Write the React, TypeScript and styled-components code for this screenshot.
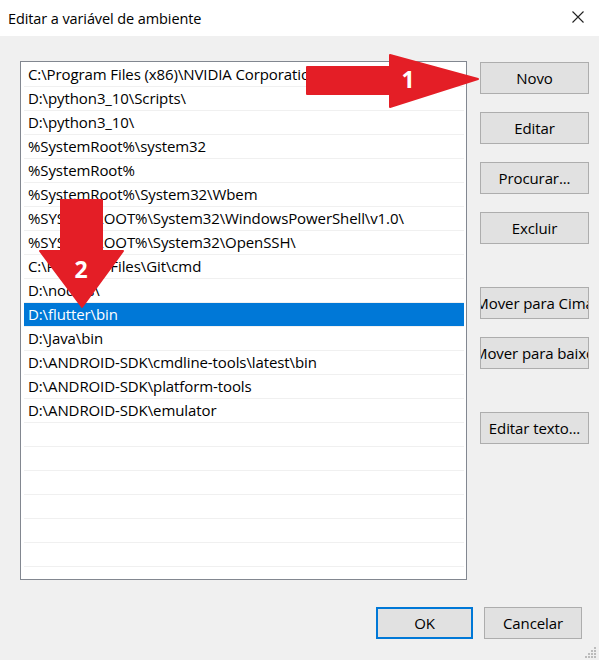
import styled, { createGlobalStyle } from "styled-components";

const GlobalStyle = createGlobalStyle`
  html, body {
    margin: 0;
    padding: 0;
    background: #f0f0f0;
  }
  * {
    box-sizing: border-box;
  }
`;

const FONT = `"Open Sans", "Noto Sans", "Liberation Sans", sans-serif`;
const RED = "#e41e26";

const PATHS = [
  "C:\\Program Files (x86)\\NVIDIA Corporation\\PhysX\\Common",
  "D:\\python3_10\\Scripts\\",
  "D:\\python3_10\\",
  "%SystemRoot%\\system32",
  "%SystemRoot%",
  "%SystemRoot%\\System32\\Wbem",
  "%SYSTEMROOT%\\System32\\WindowsPowerShell\\v1.0\\",
  "%SYSTEMROOT%\\System32\\OpenSSH\\",
  "C:\\Program Files\\Git\\cmd",
  "D:\\nodejs\\",
  "D:\\flutter\\bin",
  "D:\\Java\\bin",
  "D:\\ANDROID-SDK\\cmdline-tools\\latest\\bin",
  "D:\\ANDROID-SDK\\platform-tools",
  "D:\\ANDROID-SDK\\emulator",
];

const SELECTED = 10;
const TOTAL_ROWS = 22;

const Dialog = styled.div`
  position: relative;
  width: 599px;
  height: 660px;
  background: #f0f0f0;
  display: flex;
  flex-direction: column;
  font-family: ${FONT};
  color: #000;
  overflow: hidden;
`;

const TitleBar = styled.div`
  height: 36px;
  background: #fff;
  display: flex;
  align-items: center;
  justify-content: space-between;
  padding: 0 15px 0 8px;
`;

const Title = styled.div`
  font-size: 14.5px;
  letter-spacing: -0.1px;
`;

const CloseIcon = styled.svg`
  width: 12px;
  height: 12px;
  margin-top: -2px;
`;

const Body = styled.div`
  display: flex;
  padding: 25px 0 0 20px;
`;

const ListBox = styled.div`
  width: 447px;
  height: 519px;
  background: #fff;
  border: 1px solid #828790;
  padding: 1px 2px 0 3px;
  overflow: hidden;
`;

const Row = styled.div<{ selected?: boolean }>`
  height: 24px;
  line-height: 23px;
  padding-left: 4px;
  font-size: 15px;
  letter-spacing: -0.1px;
  white-space: nowrap;
  overflow: hidden;
  border-bottom: 1px solid #f0f0f0;
  background: ${({ selected }) => (selected ? "#0078d7" : "transparent")};
  color: ${({ selected }) => (selected ? "#fff" : "#000")};
`;

const ButtonColumn = styled.div`
  display: flex;
  flex-direction: column;
  gap: 18px;
  margin-left: 13px;
  padding-top: 1px;
  width: 109px;
`;

const WinButton = styled.div<{ gapAbove?: boolean; primary?: boolean; w?: number }>`
  height: 32px;
  width: ${({ w }) => (w ? `${w}px` : "100%")};
  margin-top: ${({ gapAbove }) => (gapAbove ? "25px" : "0")};
  background: #e1e1e1;
  border: ${({ primary }) => (primary ? "2px solid #0078d7" : "1px solid #adadad")};
  display: flex;
  align-items: center;
  justify-content: center;
  font-size: 15px;
  letter-spacing: -0.1px;
  white-space: nowrap;
  overflow: hidden;
`;

const Footer = styled.div`
  display: flex;
  justify-content: flex-end;
  gap: 11px;
  padding: 27px 17px 0 0;
`;

const Overlay = styled.svg`
  position: absolute;
  pointer-events: none;
`;

const Grip = styled.svg`
  position: absolute;
  right: 2px;
  bottom: 1px;
`;

const ArrowNumber = styled.text`
  font-family: ${FONT};
  font-weight: 700;
  font-size: 23px;
  fill: #fff;
`;

export default function App() {
  const rows = Array.from({ length: TOTAL_ROWS }, (_, i) => PATHS[i] ?? "");

  return (
    <>
      <GlobalStyle />
      <Dialog>
        <TitleBar>
          <Title>Editar a variável de ambiente</Title>
          <CloseIcon viewBox="0 0 12 12">
            <path d="M0.5 0.5 L11.5 11.5 M11.5 0.5 L0.5 11.5" stroke="#222" strokeWidth="1.1" />
          </CloseIcon>
        </TitleBar>

        <Body>
          <ListBox>
            {rows.map((p, i) => (
              <Row key={i} selected={i === SELECTED}>
                {p}
              </Row>
            ))}
          </ListBox>
          <ButtonColumn>
            <WinButton>Novo</WinButton>
            <WinButton>Editar</WinButton>
            <WinButton>Procurar...</WinButton>
            <WinButton>Excluir</WinButton>
            <WinButton gapAbove>Mover para Cima</WinButton>
            <WinButton>Mover para baixo</WinButton>
            <WinButton gapAbove>Editar texto...</WinButton>
          </ButtonColumn>
        </Body>

        <Footer>
          <WinButton primary w={97}>OK</WinButton>
          <WinButton w={98}>Cancelar</WinButton>
        </Footer>

        {/* arrow 1, pointing at "Novo" */}
        <Overlay style={{ left: 305, top: 53 }} width="176" height="56" viewBox="0 0 176 56">
          <polygon
            points="2,14 85,14 85,2 173,26 85,54 85,41 2,41"
            fill={RED}
            stroke={RED}
            strokeWidth="2"
            strokeLinejoin="round"
          />
          <ArrowNumber x="103" y="35" textAnchor="middle">1</ArrowNumber>
        </Overlay>

        {/* arrow 2, pointing at D:\flutter\bin */}
        <Overlay style={{ left: 38, top: 198 }} width="90" height="112" viewBox="0 0 90 112">
          <polygon
            points="23,2 64,2 64,53 85,53 44,109 2,53 23,53"
            fill={RED}
            stroke={RED}
            strokeWidth="2"
            strokeLinejoin="round"
          />
          <ArrowNumber x="43" y="80" textAnchor="middle">2</ArrowNumber>
        </Overlay>

        <Grip width="12" height="12" viewBox="0 0 12 12">
          {[
            [9, 0],
            [9, 3],
            [6, 3],
            [9, 6],
            [6, 6],
            [3, 6],
            [9, 9],
            [6, 9],
            [3, 9],
            [0, 9],
          ].map(([x, y], i) => (
            <rect key={i} x={x} y={y} width="2" height="2" fill="#bcbcbc" />
          ))}
        </Grip>
      </Dialog>
    </>
  );
}
